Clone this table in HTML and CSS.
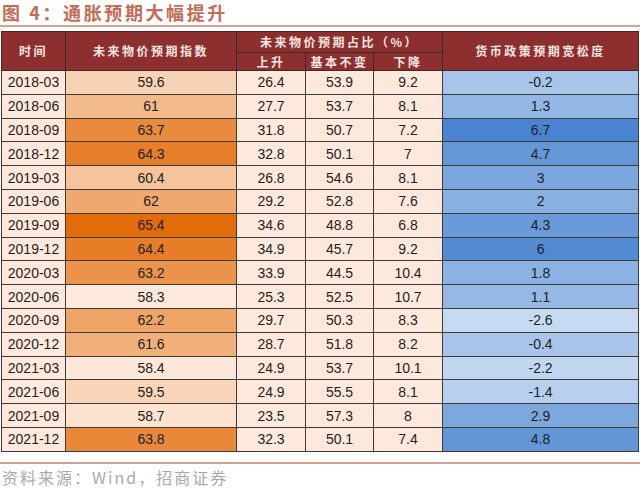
FILE: index.html
```html
<!DOCTYPE html>
<html lang="zh">
<head>
<meta charset="utf-8">
<link rel="stylesheet" href="styles.css">
</head>
<body>
<div class="page">
  <div class="title">图 4：通胀预期大幅提升</div>
  <div class="rule"></div>
  <table class="grid">
    <colgroup>
      <col class="c1"><col class="c2"><col class="c3"><col class="c4"><col class="c5"><col class="c6">
    </colgroup>
    <thead>
      <tr class="h1">
        <th rowspan="2">时间</th>
        <th rowspan="2">未来物价预期指数</th>
        <th colspan="3">未来物价预期占比（%）</th>
        <th rowspan="2">货币政策预期宽松度</th>
      </tr>
      <tr class="h2">
        <th>上升</th><th>基本不变</th><th>下降</th>
      </tr>
    </thead>
    <tbody>
      <tr><td>2018-03</td><td style="background:#f8d2b5">59.6</td><td>26.4</td><td>53.9</td><td>9.2</td><td style="background:#a6c5e9">-0.2</td></tr>
      <tr><td>2018-06</td><td style="background:#f3ba8c">61</td><td>27.7</td><td>53.7</td><td>8.1</td><td style="background:#92b7e4">1.3</td></tr>
      <tr><td>2018-09</td><td style="background:#e98a3c">63.7</td><td>31.8</td><td>50.7</td><td>7.2</td><td style="background:#4a84d0">6.7</td></tr>
      <tr><td>2018-12</td><td style="background:#e77f2a">64.3</td><td>32.8</td><td>50.1</td><td>7</td><td style="background:#6597d7">4.7</td></tr>
      <tr><td>2019-03</td><td style="background:#f5c49d">60.4</td><td>26.8</td><td>54.6</td><td>8.1</td><td style="background:#7ba7de">3</td></tr>
      <tr><td>2019-06</td><td style="background:#f0a86e">62</td><td>29.2</td><td>52.8</td><td>7.6</td><td style="background:#89b0e1">2</td></tr>
      <tr><td>2019-09</td><td style="background:#e36c0a">65.4</td><td>34.6</td><td>48.8</td><td>6.8</td><td style="background:#6a9ad9">4.3</td></tr>
      <tr><td>2019-12</td><td style="background:#e77e27">64.4</td><td>34.9</td><td>45.7</td><td>9.2</td><td style="background:#538bd3">6</td></tr>
      <tr><td>2020-03</td><td style="background:#eb934b">63.2</td><td>33.9</td><td>44.5</td><td>10.4</td><td style="background:#8bb2e2">1.8</td></tr>
      <tr><td>2020-06</td><td style="background:#fde9db">58.3</td><td>25.3</td><td>52.5</td><td>10.7</td><td style="background:#95b8e4">1.1</td></tr>
      <tr><td>2020-09</td><td style="background:#efa468">62.2</td><td>29.7</td><td>50.3</td><td>8.3</td><td style="background:#c6dbf2">-2.6</td></tr>
      <tr><td>2020-12</td><td style="background:#f1af7a">61.6</td><td>28.7</td><td>51.8</td><td>8.2</td><td style="background:#a9c6ea">-0.4</td></tr>
      <tr><td>2021-03</td><td style="background:#fde7d8">58.4</td><td>24.9</td><td>53.7</td><td>10.1</td><td style="background:#c1d7f1">-2.2</td></tr>
      <tr><td>2021-06</td><td style="background:#f9d4b8">59.5</td><td>24.9</td><td>55.5</td><td>8.1</td><td style="background:#b6d0ee">-1.4</td></tr>
      <tr><td>2021-09</td><td style="background:#fce2cf">58.7</td><td>23.5</td><td>57.3</td><td>8</td><td style="background:#7da8de">2.9</td></tr>
      <tr><td>2021-12</td><td style="background:#e98839">63.8</td><td>32.3</td><td>50.1</td><td>7.4</td><td style="background:#6396d7">4.8</td></tr>
    </tbody>
  </table>
  <div class="rule bottom"></div>
  <div class="source">资料来源：Wind，招商证券</div>
</div>
</body>
</html>
```
FILE: styles.css
```css
html, body {
  margin: 0;
  padding: 0;
  background: #ffffff;
}
.page {
  width: 640px;
  height: 488px;
  overflow: hidden;
}
.title {
  height: 25px;
  padding-left: 2px;
  font-family: "Noto Sans CJK SC", sans-serif;
  font-size: 18px;
  font-weight: 700;
  line-height: 25px;
  letter-spacing: 2.6px;
  color: #c46a55;
}
.rule {
  height: 2px;
  background: #d2a290;
  margin-bottom: 4px;
}
.rule.bottom {
  margin-top: 10px;
  margin-bottom: 0;
}
.grid {
  margin-left: 1px;
  width: 637px;
  border-collapse: collapse;
  table-layout: fixed;
  font-family: "Liberation Sans", sans-serif;
}
.c1 { width: 64px; }
.c2 { width: 171px; }
.c3 { width: 69px; }
.c4 { width: 68px; }
.c5 { width: 69px; }
.c6 { width: 196px; }
.grid th {
  background: #8e2f2f;
  color: #f6e6e0;
  font-family: "Noto Sans CJK SC", sans-serif;
  font-weight: 700;
  font-size: 12px;
  letter-spacing: 2.5px;
  border: 1px solid #3a2a2a;
  padding: 0;
  text-align: center;
  line-height: 16px;
}
.h1 { height: 21px; }
.h2 { height: 18px; }
.grid td {
  height: 22.8px;
  padding: 0;
  border: 1px solid #3e3a38;
  background: #fde9dc;
  color: #1e1e1e;
  font-size: 14px;
  text-align: center;
  line-height: 16px;
}
.source {
  padding-left: 2px;
  padding-top: 2px;
  font-family: "Noto Sans CJK SC", sans-serif;
  font-size: 16px;
  letter-spacing: 2px;
  color: #a9a9a9;
  line-height: 23px;
}
```
